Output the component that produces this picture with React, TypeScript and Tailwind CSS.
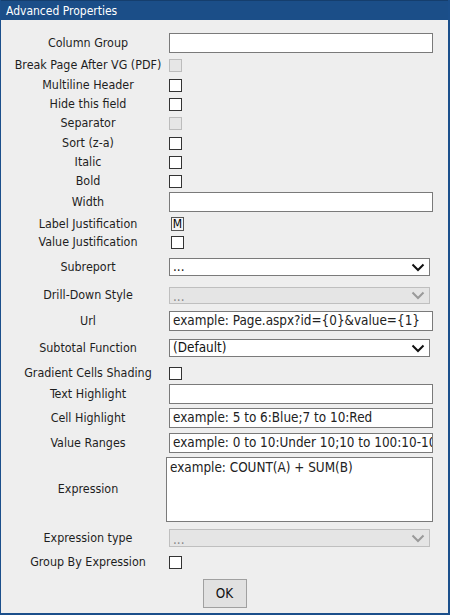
import React from "react";

const LABEL = "w-[162px] shrink-0 text-center text-[12.4px] leading-none text-[#1e1e1e] whitespace-nowrap";

function Row({ cls, label, children }: { cls: string; label: string; children?: React.ReactNode }) {
  return (
    <div className={"flex items-center pl-[6px] " + cls}>
      <div className={LABEL}>{label}</div>
      <div className="flex items-center">{children}</div>
    </div>
  );
}

function TextBox({ text, w = "w-[264px]" }: { text?: string; w?: string }) {
  return (
    <div className={"h-[20px] bg-white border border-[#7a7a7a] flex items-center pl-[3px] overflow-hidden whitespace-nowrap text-[13.4px] text-[#222] " + w}>
      {text}
    </div>
  );
}

function Check({ disabled }: { disabled?: boolean }) {
  return disabled ? (
    <div className="w-[13px] h-[13px] bg-[#e6e6e6] border border-[#bcbcbc]" />
  ) : (
    <div className="w-[13px] h-[13px] bg-white border border-[#333]" />
  );
}

function Chevron({ color }: { color: string }) {
  return (
    <svg width="14" height="9" viewBox="0 0 14 9">
      <path d="M1.5 1.5 L7 7 L12.5 1.5" fill="none" stroke={color} strokeWidth="2" />
    </svg>
  );
}

function Select({ text, disabled, h = "h-[18px]" }: { text: string; disabled?: boolean; h?: string }) {
  return disabled ? (
    <div className={"w-[261px] bg-[#e5e5e5] border border-[#bfbfbf] flex items-center justify-between pl-[3px] pr-[4px] text-[13.4px] text-[#888] " + h}>
      <span className="leading-none pt-[3px]">{text}</span>
      <Chevron color="#9a9a9a" />
    </div>
  ) : (
    <div className={"w-[261px] bg-white border border-[#7a7a7a] flex items-center justify-between pl-[3px] pr-[4px] text-[13.4px] text-[#111] " + h}>
      <span className="leading-none">{text}</span>
      <Chevron color="#111" />
    </div>
  );
}

export default function App() {
  return (
    <div
      className="w-[450px] h-[615px] bg-[#eeeeee] border-l border-r-2 border-b-2 border-[#1b4f8b] flex flex-col overflow-hidden"
      style={{ fontFamily: '"DejaVu Sans Condensed", "DejaVu Sans", sans-serif', fontStretch: "condensed" }}
    >
      <div className="h-[20px] shrink-0 bg-[#1b4e88] border-t border-[#153e6d] flex items-center pl-[5px] text-white text-[12px] leading-none">
        Advanced Properties
      </div>
      <Row cls="mt-[13px] h-[20px]" label="Column Group"><TextBox /></Row>
      <Row cls="mt-[6px] h-[13px]" label="Break Page After VG (PDF)"><Check disabled /></Row>
      <Row cls="mt-[7px] h-[13px]" label="Multiline Header"><Check /></Row>
      <Row cls="mt-[6px] h-[13px]" label="Hide this field"><Check /></Row>
      <Row cls="mt-[6px] h-[13px]" label="Separator"><Check disabled /></Row>
      <Row cls="mt-[7px] h-[13px]" label="Sort (z-a)"><Check /></Row>
      <Row cls="mt-[6px] h-[13px]" label="Italic"><Check /></Row>
      <Row cls="mt-[6px] h-[13px]" label="Bold"><Check /></Row>
      <Row cls="mt-[4px] h-[20px]" label="Width"><TextBox /></Row>
      <Row cls="mt-[5px] h-[14px]" label="Label Justification">
        <div className="ml-[2px] w-[13px] h-[14px] border border-[#555] bg-[#f4f4f4] flex items-center justify-center text-[12px] leading-none text-black">M</div>
      </Row>
      <Row cls="mt-[5px] h-[13px]" label="Value Justification"><div className="ml-[2px]"><Check /></div></Row>
      <Row cls="mt-[9px] h-[18px]" label="Subreport"><Select text="..." /></Row>
      <Row cls="mt-[11px] h-[17px]" label="Drill-Down Style"><Select text="..." disabled h="h-[17px]" /></Row>
      <Row cls="mt-[7px] h-[20px]" label="Url"><TextBox text="example: Page.aspx?id={0}&value={1}" /></Row>
      <Row cls="mt-[8px] h-[18px]" label="Subtotal Function"><Select text="(Default)" /></Row>
      <Row cls="mt-[10px] h-[13px]" label="Gradient Cells Shading"><Check /></Row>
      <Row cls="mt-[4px] h-[20px]" label="Text Highlight"><TextBox /></Row>
      <Row cls="mt-[4px] h-[20px]" label="Cell Highlight"><TextBox text="example: 5 to 6:Blue;7 to 10:Red" /></Row>
      <Row cls="mt-[5px] h-[20px]" label="Value Ranges"><TextBox text="example: 0 to 10:Under 10;10 to 100:10-100" /></Row>
      <Row cls="mt-[4px] h-[65px]" label="Expression">
        <div className="-ml-[3px] w-[267px] h-[65px] bg-white border border-[#7a7a7a] pl-[3px] pt-[2px] text-[13.4px] text-[#222] leading-[16px]">
          example: COUNT(A) + SUM(B)
        </div>
      </Row>
      <Row cls="mt-[7px] h-[18px]" label="Expression type"><Select text="..." disabled /></Row>
      <Row cls="mt-[9px] h-[13px]" label="Group By Expression"><Check /></Row>
      <div className="mt-[10px] flex justify-center">
        <div className="w-[44px] h-[29px] bg-[#e1e1e1] border border-[#a0a0a0] flex items-center justify-center text-[13.4px] text-[#111] leading-none">
          OK
        </div>
      </div>
    </div>
  );
}
